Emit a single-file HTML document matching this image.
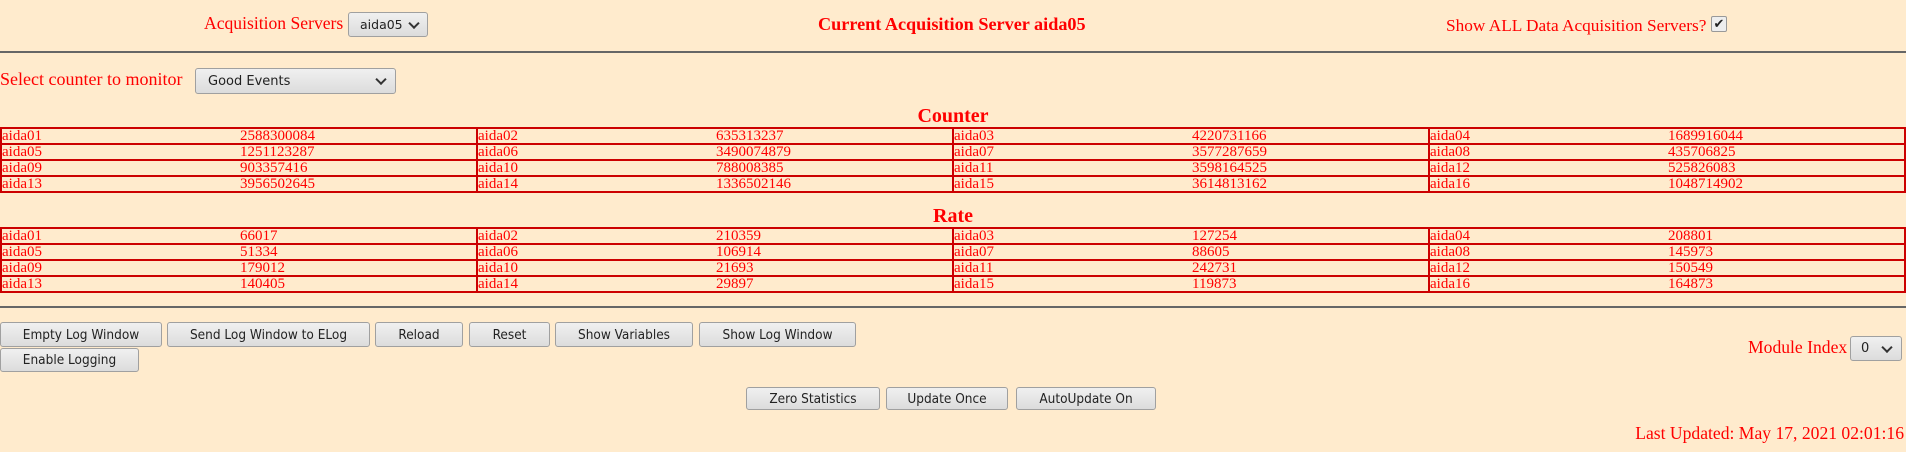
<!DOCTYPE html>
<html><head><meta charset="utf-8"><style>
body{margin:0;width:1906px;height:452px;background:#ffebcd;font-family:"Liberation Serif",serif;color:#f00;position:relative;overflow:hidden}
.a{position:absolute;white-space:nowrap}
.sel,.btn{position:absolute;box-sizing:border-box;background:linear-gradient(#f0f0f0,#dcdcdc);border:1px solid #a0a0a0;border-radius:3px;font-family:"DejaVu Sans","Liberation Sans",sans-serif;font-size:13px;color:#222;display:flex;align-items:center}
.btn{justify-content:center;font-family:"DejaVu Sans Condensed","DejaVu Sans",sans-serif;font-stretch:condensed;font-size:13.5px}
.sel span.c{position:absolute;right:10px;top:50%;width:6px;height:6px;border-right:2px solid #333;border-bottom:2px solid #333;transform:translateY(-70%) rotate(45deg)}
hr{position:absolute;left:0;width:1906px;margin:0;border:0;height:2px;background:#666}
.tbl{position:absolute;left:0;width:1906px}
.row{display:flex;height:16px}
.cell{box-sizing:border-box;width:478px;border:2px solid #c00;margin-top:-2px;position:relative;font-size:15px;line-height:13px;height:18px}
.cell+.cell{margin-left:-2px}
.cell .n{position:absolute;left:0;top:1px}
.cell .v{position:absolute;left:238px;top:1px}
h3{position:absolute;margin:0;left:0;width:1906px;text-align:center;font-size:20px;font-weight:bold}
.L{font-size:17.6px}
</style></head><body>
<div class="a L" style="left:204px;top:13px">Acquisition Servers</div>
<div class="sel" style="left:348px;top:12px;width:80px;height:25px;padding-left:11px;font-size:12.5px">aida05<span class="c" style="right:9px"></span></div>
<div class="a" style="left:818px;top:14px;font-size:18.2px;font-weight:bold">Current Acquisition Server aida05</div>
<div class="a L" style="left:1446px;top:16px;font-size:17.3px">Show ALL Data Acquisition Servers?</div>
<div class="a" style="left:1711px;top:16px;width:14px;height:14px;border:1px solid #999;border-radius:2px;background:#eee;color:#222;font-size:13px;line-height:14px;text-align:center">✔</div>
<hr style="top:51px">
<div class="a" style="left:0;top:69px;font-size:18px">Select counter to monitor</div>
<div class="sel" style="left:195px;top:68px;width:201px;height:26px;padding-left:12px">Good Events<span class="c"></span></div>
<h3 style="top:105px">Counter</h3>
<div class="tbl" style="top:129px">
<div class="row"><div class="cell"><span class="n">aida01</span><span class="v">2588300084</span></div><div class="cell"><span class="n">aida02</span><span class="v">635313237</span></div><div class="cell"><span class="n">aida03</span><span class="v">4220731166</span></div><div class="cell"><span class="n">aida04</span><span class="v">1689916044</span></div></div>
<div class="row"><div class="cell"><span class="n">aida05</span><span class="v">1251123287</span></div><div class="cell"><span class="n">aida06</span><span class="v">3490074879</span></div><div class="cell"><span class="n">aida07</span><span class="v">3577287659</span></div><div class="cell"><span class="n">aida08</span><span class="v">435706825</span></div></div>
<div class="row"><div class="cell"><span class="n">aida09</span><span class="v">903357416</span></div><div class="cell"><span class="n">aida10</span><span class="v">788008385</span></div><div class="cell"><span class="n">aida11</span><span class="v">3598164525</span></div><div class="cell"><span class="n">aida12</span><span class="v">525826083</span></div></div>
<div class="row"><div class="cell"><span class="n">aida13</span><span class="v">3956502645</span></div><div class="cell"><span class="n">aida14</span><span class="v">1336502146</span></div><div class="cell"><span class="n">aida15</span><span class="v">3614813162</span></div><div class="cell"><span class="n">aida16</span><span class="v">1048714902</span></div></div>
</div>
<h3 style="top:205px">Rate</h3>
<div class="tbl" style="top:229px">
<div class="row"><div class="cell"><span class="n">aida01</span><span class="v">66017</span></div><div class="cell"><span class="n">aida02</span><span class="v">210359</span></div><div class="cell"><span class="n">aida03</span><span class="v">127254</span></div><div class="cell"><span class="n">aida04</span><span class="v">208801</span></div></div>
<div class="row"><div class="cell"><span class="n">aida05</span><span class="v">51334</span></div><div class="cell"><span class="n">aida06</span><span class="v">106914</span></div><div class="cell"><span class="n">aida07</span><span class="v">88605</span></div><div class="cell"><span class="n">aida08</span><span class="v">145973</span></div></div>
<div class="row"><div class="cell"><span class="n">aida09</span><span class="v">179012</span></div><div class="cell"><span class="n">aida10</span><span class="v">21693</span></div><div class="cell"><span class="n">aida11</span><span class="v">242731</span></div><div class="cell"><span class="n">aida12</span><span class="v">150549</span></div></div>
<div class="row"><div class="cell"><span class="n">aida13</span><span class="v">140405</span></div><div class="cell"><span class="n">aida14</span><span class="v">29897</span></div><div class="cell"><span class="n">aida15</span><span class="v">119873</span></div><div class="cell"><span class="n">aida16</span><span class="v">164873</span></div></div>
</div>
<hr style="top:306px">
<div class="btn" style="left:0;top:322px;width:162px;height:25px">Empty Log Window</div>
<div class="btn" style="left:167px;top:322px;width:203px;height:25px">Send Log Window to ELog</div>
<div class="btn" style="left:375px;top:322px;width:88px;height:25px">Reload</div>
<div class="btn" style="left:469px;top:322px;width:81px;height:25px">Reset</div>
<div class="btn" style="left:555px;top:322px;width:138px;height:25px">Show Variables</div>
<div class="btn" style="left:699px;top:322px;width:157px;height:25px">Show Log Window</div>
<div class="btn" style="left:0;top:348px;width:139px;height:24px">Enable Logging</div>
<div class="a L" style="left:1748px;top:337px">Module Index</div>
<div class="sel" style="left:1850px;top:336px;width:52px;height:25px;padding-left:10px">0<span class="c"></span></div>
<div class="btn" style="left:746px;top:387px;width:134px;height:23px">Zero Statistics</div>
<div class="btn" style="left:886px;top:387px;width:122px;height:23px">Update Once</div>
<div class="btn" style="left:1016px;top:387px;width:140px;height:23px">AutoUpdate On</div>
<div class="a L" style="right:2px;top:423px">Last Updated: May 17, 2021 02:01:16</div>
</body></html>
